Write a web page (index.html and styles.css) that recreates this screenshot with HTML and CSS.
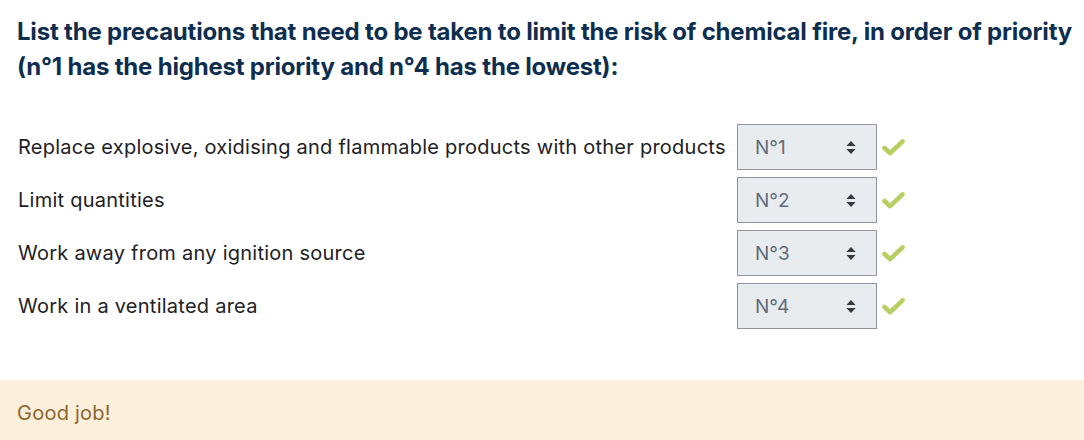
FILE: index.html
```html
<!DOCTYPE html>
<html>
<head>
<meta charset="utf-8">
<link rel="stylesheet" href="styles.css">
</head>
<body>
<div class="question">
  <h2 class="qtext">List the precautions that need to be taken to limit the risk of chemical fire, in order of priority (n°1 has the highest priority and n°4 has the lowest):</h2>
  <div class="answers">
    <div class="row">
      <div class="label">Replace explosive, oxidising and flammable products with other products</div>
      <div class="select"><span>N°1</span><svg class="arrows" viewBox="0 0 10 14" width="10" height="13"><path d="M5 0 L10 5.5 H0 Z M0 8.5 H10 L5 14 Z" fill="#343a40"/></svg></div>
      <svg class="check" viewBox="0 0 24 20" width="23" height="19"><path d="M2.5 10.5 L8.5 16 L21.5 3.5" fill="none" stroke="#b6cf63" stroke-width="4.8" stroke-linecap="round" stroke-linejoin="round"/></svg>
    </div>
    <div class="row">
      <div class="label">Limit quantities</div>
      <div class="select"><span>N°2</span><svg class="arrows" viewBox="0 0 10 14" width="10" height="13"><path d="M5 0 L10 5.5 H0 Z M0 8.5 H10 L5 14 Z" fill="#343a40"/></svg></div>
      <svg class="check" viewBox="0 0 24 20" width="23" height="19"><path d="M2.5 10.5 L8.5 16 L21.5 3.5" fill="none" stroke="#b6cf63" stroke-width="4.8" stroke-linecap="round" stroke-linejoin="round"/></svg>
    </div>
    <div class="row">
      <div class="label">Work away from any ignition source</div>
      <div class="select"><span>N°3</span><svg class="arrows" viewBox="0 0 10 14" width="10" height="13"><path d="M5 0 L10 5.5 H0 Z M0 8.5 H10 L5 14 Z" fill="#343a40"/></svg></div>
      <svg class="check" viewBox="0 0 24 20" width="23" height="19"><path d="M2.5 10.5 L8.5 16 L21.5 3.5" fill="none" stroke="#b6cf63" stroke-width="4.8" stroke-linecap="round" stroke-linejoin="round"/></svg>
    </div>
    <div class="row">
      <div class="label">Work in a ventilated area</div>
      <div class="select"><span>N°4</span><svg class="arrows" viewBox="0 0 10 14" width="10" height="13"><path d="M5 0 L10 5.5 H0 Z M0 8.5 H10 L5 14 Z" fill="#343a40"/></svg></div>
      <svg class="check" viewBox="0 0 24 20" width="23" height="19"><path d="M2.5 10.5 L8.5 16 L21.5 3.5" fill="none" stroke="#b6cf63" stroke-width="4.8" stroke-linecap="round" stroke-linejoin="round"/></svg>
    </div>
  </div>
  <div class="feedback">Good job!</div>
</div>
</body>
</html>
```
FILE: styles.css
```css
html, body {
  margin: 0;
  padding: 0;
  background: #ffffff;
}
body {
  font-family: "Inter", "Liberation Sans", sans-serif;
  color: #1d2125;
}
.question {
  width: 1084px;
}
.qtext {
  margin: 0;
  padding: 14px 0 0 17px;
  font-size: 24px;
  line-height: 35px;
  font-weight: 700;
  color: #0e2e50;
  letter-spacing: -0.2px;
}
.answers {
  padding: 40px 0 0 18px;
  display: flex;
  flex-direction: column;
  gap: 7px;
}
.row {
  display: flex;
  align-items: center;
  height: 46px;
}
.label {
  width: 719px;
  font-size: 20px;
  letter-spacing: 0.25px;
  color: #1d2125;
}
.select {
  box-sizing: border-box;
  width: 140px;
  height: 46px;
  background: #e9ecef;
  border: 1px solid #8f959e;
  display: flex;
  align-items: center;
  justify-content: space-between;
  padding: 0 20px 0 17px;
  font-size: 19px;
  color: #5f6b78;
}
.arrows {
  display: block;
}
.check {
  margin-left: 5px;
  display: block;
}
.feedback {
  margin-top: 51px;
  height: 66px;
  background: #fcefdc;
  color: #8e662e;
  font-size: 20px;
  letter-spacing: 0.25px;
  padding: 0 0 0 17px;
  display: flex;
  align-items: center;
  box-sizing: border-box;
}
```
